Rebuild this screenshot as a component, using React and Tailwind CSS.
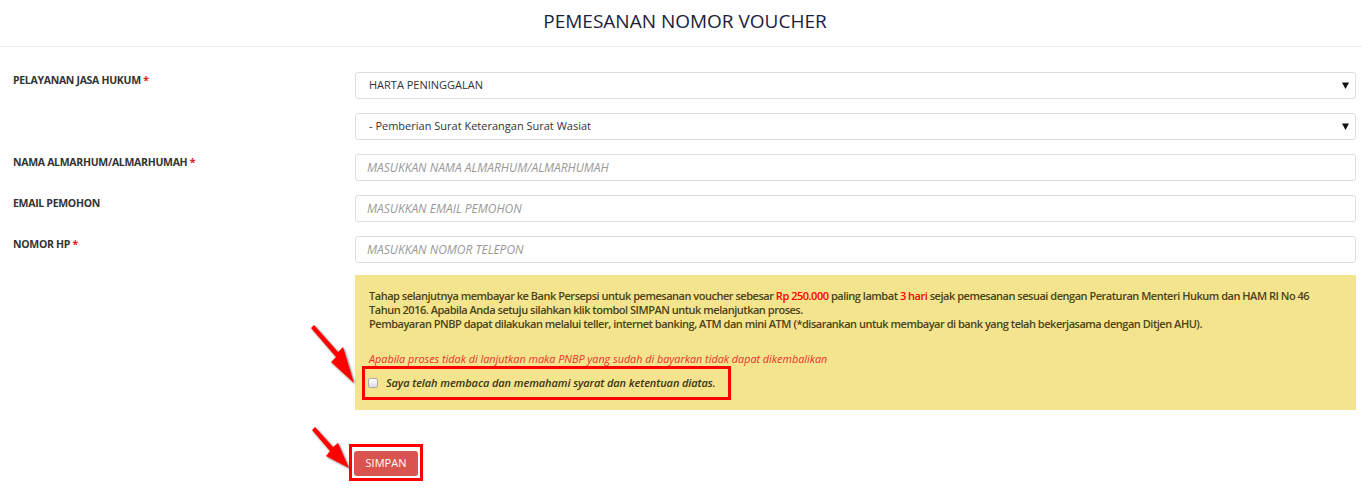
import React from "react";

const font = { fontFamily: '"Open Sans", "Liberation Sans", sans-serif' };

const Label = ({ children, required }) => (
  <div className="w-[342px] shrink-0 pt-[1px] text-[10.5px] leading-[15px] font-bold uppercase tracking-[-0.3px] text-[#333]">
    {children}
    {required && <span className="text-[#e02020]"> *</span>}
  </div>
);

const SelectBox = ({ value }) => (
  <div className="flex-1 h-[27px] flex items-center justify-between pl-[13px] pr-[6px] border border-[#ddd] rounded-[3px] bg-white text-[11px] text-[#333]">
    <span>{value}</span>
    <svg width="7" height="7" viewBox="0 0 7 7">
      <path d="M0 0.5 H7 L3.5 7 Z" fill="#111" />
    </svg>
  </div>
);

const TextInput = ({ placeholder }) => (
  <div className="flex-1 h-[27px] flex items-center pl-[11px] border border-[#ddd] rounded-[3px] bg-white text-[12px] italic text-[#999]">
    {placeholder}
  </div>
);

const Row = ({ label, required, children }) => (
  <div className="flex">
    {label ? <Label required={required}>{label}</Label> : <div className="w-[342px] shrink-0" />}
    {children}
  </div>
);

// annotation arrows drawn over the form
const Arrows = () => (
  <svg className="absolute inset-0 pointer-events-none" width="1362" height="488">
    <defs>
      <filter id="sh" x="-50%" y="-50%" width="200%" height="200%">
        <feDropShadow dx="1" dy="1" stdDeviation="1" floodColor="#000" floodOpacity="0.6" />
      </filter>
    </defs>
    <g filter="url(#sh)" fill="#f00">
      <polygon points="311,328 314,325 338,352 343,347 354,383 331,362 336,357" />
      <polygon points="312,430 315,427 333,447 338,443 349,468 326,456 330,451" />
    </g>
  </svg>
);

export default function App() {
  return (
    <div className="relative w-[1362px] h-[488px] bg-white overflow-hidden" style={font}>
      <div className="h-[47px] flex items-center justify-center border-b border-[#eee]">
        <h1 className="text-[19px] text-[#1c1c3c] pb-[4px] pl-[8px]">PEMESANAN NOMOR VOUCHER</h1>
      </div>

      <div className="pl-[13px] pr-[6px] pt-[25px] flex flex-col gap-[14px]">
        <Row label="Pelayanan Jasa Hukum" required>
          <SelectBox value="HARTA PENINGGALAN" />
        </Row>
        <Row>
          <SelectBox value="- Pemberian Surat Keterangan Surat Wasiat" />
        </Row>
        <Row label="Nama Almarhum/Almarhumah" required>
          <TextInput placeholder="MASUKKAN NAMA ALMARHUM/ALMARHUMAH" />
        </Row>
        <Row label="Email Pemohon">
          <TextInput placeholder="MASUKKAN EMAIL PEMOHON" />
        </Row>
        <Row label="Nomor HP" required>
          <TextInput placeholder="MASUKKAN NOMOR TELEPON" />
        </Row>
      </div>

      <div className="pl-[13px] pr-[6px] mt-[12px] flex">
        <div className="w-[342px] shrink-0" />
        <div className="flex-1 bg-[#f5e48e] pl-[14px] pr-[10px] pt-[14px] pb-[10px]">
          <p className="text-[11px] leading-[14px] font-semibold tracking-[-0.48px] text-[#4a4318]">
            Tahap selanjutnya membayar ke Bank Persepsi untuk pemesanan voucher sebesar{" "}
            <span className="text-[#f00]">Rp 250.000</span> paling lambat{" "}
            <span className="text-[#f00]">3 hari</span> sejak pemesanan sesuai dengan Peraturan Menteri Hukum dan HAM RI No 46
            <br />
            Tahun 2016. Apabila Anda setuju silahkan klik tombol SIMPAN untuk melanjutkan proses.
            <br />
            Pembayaran PNBP dapat dilakukan melalui teller, internet banking, ATM dan mini ATM (*disarankan untuk membayar di bank yang telah bekerjasama dengan Ditjen AHU).
          </p>
          <p className="mt-[21px] text-[10.8px] leading-[14px] italic text-[#e8322a]">
            Apabila proses tidak di lanjutkan maka PNBP yang sudah di bayarkan tidak dapat dikembalikan
          </p>
          <div className="-ml-[7px] w-[369px] h-[34px] border-[3px] border-[#f00] flex items-center pl-[3px]">
            <span className="w-[10px] h-[10px] shrink-0 rounded-[2px] border border-[#aaa] bg-gradient-to-b from-white to-[#ddd]" />
            <span className="ml-[8px] whitespace-nowrap text-[11px] font-semibold italic tracking-[-0.1px] text-[#3a3415]">
              Saya telah membaca dan memahami syarat dan ketentuan diatas.
            </span>
          </div>
        </div>
      </div>

      <div className="pl-[349px] mt-[34px]">
        <div className="inline-flex w-[74px] h-[37px] border-[3px] border-[#f00] pl-[2px] pt-[4px]">
          <button className="w-[64px] h-[25px] bg-[#d9534f] rounded-[3px] text-white text-[11px]">SIMPAN</button>
        </div>
      </div>

      <Arrows />
    </div>
  );
}
